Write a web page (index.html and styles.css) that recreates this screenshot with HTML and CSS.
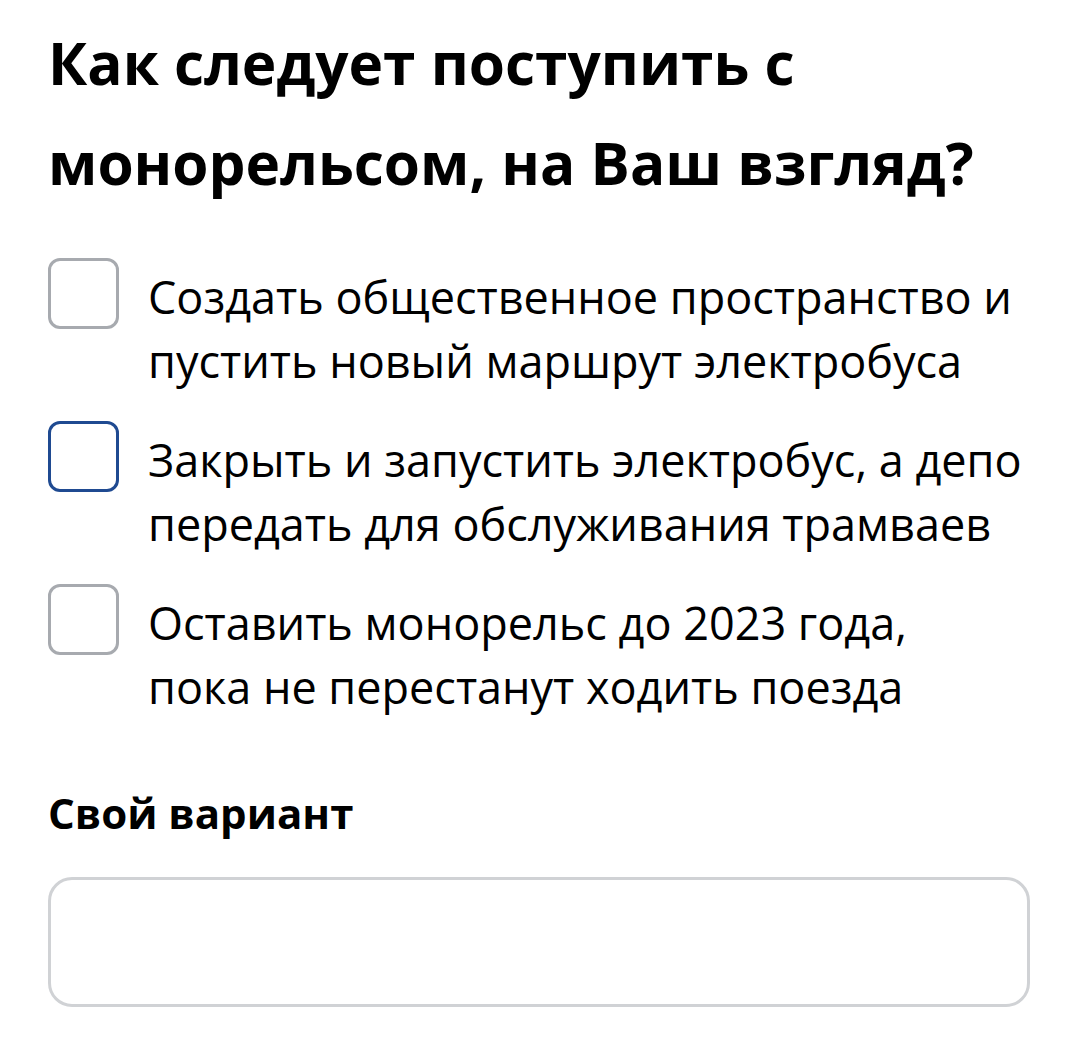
FILE: index.html
```html
<!DOCTYPE html>
<html>
<head>
    <title>Опрос</title>
    <link rel="stylesheet" href="styles.css">
</head>
<body>
    <div class="poll">
        <h1>Как следует поступить с монорельсом, на Ваш взгляд?</h1>

        <div class="options">
            <label class="option">
                <input type="checkbox" name="answer" value="1">
                <span class="option-text">Создать общественное пространство и пустить новый маршрут электробуса</span>
            </label>
            <label class="option">
                <input type="checkbox" name="answer" value="2" class="focused">
                <span class="option-text">Закрыть и запустить электробус, а депо передать для обслуживания трамваев</span>
            </label>
            <label class="option">
                <input type="checkbox" name="answer" value="3">
                <span class="option-text">Оставить монорельс до 2023 года,<br>пока не перестанут ходить поезда</span>
            </label>
        </div>

        <div class="own-answer">
            <label for="own">Свой вариант</label>
            <input type="text" id="own" name="own">
        </div>
    </div>
</body>
</html>
```

FILE: styles.css
```css
body {
    margin: 0;
    background-color: #fff;
    color: #000;
    font-family: "Open Sans", Arial, sans-serif;
}
.poll {
    padding: 0 50px 0 48px;
}
h1 {
    margin: 12px 0 0;
    font-size: 58.5px;
    line-height: 100px;
    font-weight: 700;
}
.options {
    margin-top: 46px;
    display: flex;
    flex-direction: column;
    gap: 28px;
}
.option {
    display: flex;
    align-items: flex-start;
    gap: 29px;
    cursor: pointer;
}
.option input {
    appearance: none;
    -webkit-appearance: none;
    flex: none;
    width: 71px;
    height: 71px;
    margin: 0;
    border: 3px solid #a7aaaf;
    border-radius: 12px;
    box-sizing: border-box;
    background-color: #fff;
}
.option input.focused {
    border-color: #1f4a91;
}
.option-text {
    padding-top: 7px;
    font-size: 45px;
    line-height: 64px;
}
.own-answer {
    margin-top: 66px;
}
.own-answer label {
    display: block;
    font-size: 42px;
    line-height: 56px;
    font-weight: 700;
}
.own-answer input {
    display: block;
    width: 100%;
    height: 130px;
    margin-top: 36px;
    border: 3px solid #d0d2d5;
    border-radius: 24px;
    box-sizing: border-box;
    background-color: #fff;
}
```
